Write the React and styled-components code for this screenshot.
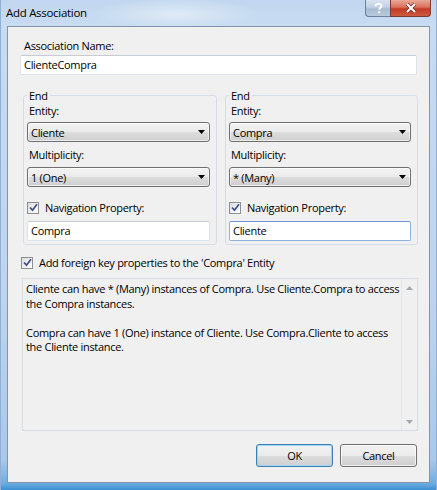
import React from "react";
import styled, { createGlobalStyle, css } from "styled-components";

const Global = createGlobalStyle`
  html, body { margin: 0; padding: 0; background: #c8dbf0; }
  body { width: 437px; height: 490px; overflow: hidden; }
  * { box-sizing: border-box; }
`;

const FONT = `"Open Sans", "Noto Sans", sans-serif`;

const Window = styled.div`
  width: 437px;
  height: 490px;
  display: flex;
  flex-direction: column;
  font-family: ${FONT};
  font-size: 11px;
  letter-spacing: -0.3px;
  color: #000;
  background:
    radial-gradient(ellipse 120px 22px at 175px 14px, rgba(255,255,255,0.45), rgba(255,255,255,0) 70%),
    linear-gradient(to bottom, #c2d7ef 0px, #c7dbf1 26px, #bdd4ee 300px, #a9c8ea 460px, #6eaee2 483px, #3d8fd2 490px);
  border-left: 1px solid #8fb0d4;
  border-right: 1px solid #8fb0d4;
`;

const TitleBar = styled.div`
  height: 26px;
  display: flex;
  align-items: flex-start;
  justify-content: space-between;
  padding-left: 5px;
  padding-right: 5px;
`;

const Title = styled.div`
  font-size: 11.5px;
  line-height: 15px;
  padding-top: 5px;
  color: #000;
`;

const CaptionButtons = styled.div`
  display: flex;
`;

const CaptionButton = styled.div`
  height: 17px;
  display: flex;
  align-items: center;
  justify-content: center;
  border: 1px solid #6b7f98;
  border-top: none;
  ${(p) =>
    p.$close
      ? css`
          width: 41px;
          border-radius: 0 0 4px 0;
          background: linear-gradient(to bottom, #eaa898 0%, #d9705c 45%, #c23a26 55%, #cf5a40 100%);
          border-color: #7b3b33;
        `
      : css`
          width: 25px;
          border-right: none;
          border-radius: 0 0 0 4px;
          background: linear-gradient(to bottom, #d7e2ef 0%, #c2d1e3 45%, #a9bbd2 55%, #b8c9de 100%);
        `}
`;

const Client = styled.div`
  flex: 1;
  margin: 0 6px 7px 6px;
  border: 1px solid #8394ab;
  background: #f0f0f0;
  padding: 11px 12px 0 12px;
  display: flex;
  flex-direction: column;
`;

const Label = styled.div`
  line-height: 15px;
  padding-left: ${(p) => p.$indent || 0}px;
  margin-top: ${(p) => p.$mt || 0}px;
  white-space: nowrap;
`;

const TextBox = styled.div`
  height: 20px;
  margin-top: ${(p) => p.$mt || 0}px;
  background: #fff;
  border: 1px solid ${(p) => (p.$focus ? "#8bb3de" : "#dde3ea")};
  border-top-color: ${(p) => (p.$focus ? "#6d9bd1" : "#c5ccd6")};
  border-radius: 2px;
  padding: 0 3px;
  line-height: 18px;
  white-space: nowrap;
`;

const GroupsRow = styled.div`
  display: grid;
  grid-template-columns: 194px 193px;
  column-gap: 8px;
  margin-top: 13px;
  margin-left: 3px;
`;

const Group = styled.fieldset`
  margin: 0;
  min-width: 0;
  border: 1px solid #d5dde6;
  border-radius: 3px;
  padding: 0 6px 3px 3px;
  display: flex;
  flex-direction: column;
`;

const Legend = styled.legend`
  padding: 0 2px;
  margin-left: 0;
  line-height: 15px;
`;

const Combo = styled.div`
  height: 20px;
  margin-top: ${(p) => p.$mt || 0}px;
  display: flex;
  align-items: center;
  justify-content: space-between;
  padding: 0 4px 0 3px;
  border: 1px solid #707070;
  border-radius: 3px;
  background: linear-gradient(to bottom, #f3f3f3 0%, #ebebeb 50%, #dddddd 50%, #cfcfcf 100%);
  box-shadow: inset 0 0 0 1px rgba(255, 255, 255, 0.6);
  white-space: nowrap;
`;

const CheckRow = styled.div`
  display: flex;
  align-items: center;
  gap: 6px;
  height: 15px;
  margin-top: ${(p) => p.$mt || 0}px;
  margin-left: ${(p) => p.$ml || 0}px;
  white-space: nowrap;
`;

const CheckBox = styled.span`
  width: 12px;
  height: 12px;
  flex: none;
  border: 1px solid #8e8f8f;
  background: linear-gradient(135deg, #dcdcdc 0%, #f4f4f4 60%, #ffffff 100%);
  display: flex;
  align-items: center;
  justify-content: center;
`;

const Description = styled.div`
  margin-top: 8px;
  margin-left: 2px;
  margin-right: -1px;
  height: 153px;
  border: 1px solid #d3dbe3;
  display: flex;
`;

const DescText = styled.div`
  flex: 1;
  padding: 3px 0 0 3px;
  line-height: 14.5px;
  p {
    margin: 0 0 14.5px 0;
  }
`;

const ScrollBar = styled.div`
  width: 16px;
  border-left: 1px solid #e4e8ec;
  display: flex;
  flex-direction: column;
  justify-content: space-between;
  align-items: center;
  padding: 7px 0 6px;
`;

const ButtonRow = styled.div`
  display: flex;
  justify-content: flex-end;
  gap: 7px;
  margin-top: 13px;
`;

const Button = styled.div`
  width: 77px;
  height: 23px;
  display: flex;
  align-items: center;
  justify-content: center;
  border-radius: 3px;
  border: 1px solid ${(p) => (p.$default ? "#3c7fb1" : "#707070")};
  background: linear-gradient(to bottom, #f2f2f2 0%, #ebebeb 50%, #dddddd 50%, #cfcfcf 100%);
  box-shadow: inset 0 0 0 1px ${(p) => (p.$default ? "#9fd5f4" : "rgba(255,255,255,0.7)")};
`;

const Arrow = () => (
  <svg width="7" height="4" viewBox="0 0 7 4">
    <path d="M0 0 H7 L3.5 4 Z" fill="#000" />
  </svg>
);

const Check = () => (
  <svg width="9" height="9" viewBox="0 0 9 9">
    <path d="M1 4.5 L3.5 7.2 L8 1.2" fill="none" stroke="#3b4f8e" strokeWidth="1.7" />
  </svg>
);

const ScrollArrow = ({ up }) => (
  <svg width="7" height="4" viewBox="0 0 7 4">
    <path d={up ? "M0 4 H7 L3.5 0 Z" : "M0 0 H7 L3.5 4 Z"} fill="#a4a9ae" />
  </svg>
);

const End = ({ entity, mult, nav, focus }) => (
  <Group>
    <Legend>End</Legend>
    <Label $indent={2}>Entity:</Label>
    <Combo $mt={4}>
      <span>{entity}</span>
      <Arrow />
    </Combo>
    <Label $indent={2} $mt={5}>Multiplicity:</Label>
    <Combo $mt={5}>
      <span>{mult}</span>
      <Arrow />
    </Combo>
    <CheckRow $mt={13}>
      <CheckBox>
        <Check />
      </CheckBox>
      Navigation Property:
    </CheckRow>
    <TextBox $mt={6} $focus={focus}>{nav}</TextBox>
  </Group>
);

export default function App() {
  return (
    <>
      <Global />
      <Window>
        <TitleBar>
          <Title>Add Association</Title>
          <CaptionButtons>
            <CaptionButton>
              <svg width="9" height="11" viewBox="0 0 9 11">
                <path
                  d="M1.5 3.2 C1.5 1.5 2.8 0.8 4.5 0.8 C6.3 0.8 7.5 1.7 7.5 3.1 C7.5 4.6 5.2 5 5.2 6.8"
                  fill="none"
                  stroke="#fff"
                  strokeWidth="1.8"
                />
                <rect x="4.2" y="8.3" width="2" height="2" fill="#fff" />
              </svg>
            </CaptionButton>
            <CaptionButton $close>
              <svg width="12" height="10" viewBox="0 0 12 10">
                <path d="M2 1 L10 9 M10 1 L2 9" stroke="#6a2a22" strokeWidth="3.4" />
                <path d="M2 1 L10 9 M10 1 L2 9" stroke="#fff" strokeWidth="2" />
              </svg>
            </CaptionButton>
          </CaptionButtons>
        </TitleBar>
        <Client>
          <Label $indent={4}>Association Name:</Label>
          <TextBox $mt={2}>ClienteCompra</TextBox>
          <GroupsRow>
            <End entity="Cliente" mult="1 (One)" nav="Compra" />
            <End entity="Compra" mult="* (Many)" nav="Cliente" focus />
          </GroupsRow>
          <CheckRow $mt={10} $ml={1}>
            <CheckBox>
              <Check />
            </CheckBox>
            Add foreign key properties to the 'Compra' Entity
          </CheckRow>
          <Description>
            <DescText>
              <p>
                Cliente can have * (Many) instances of Compra. Use Cliente.Compra to access the
                Compra instances.
              </p>
              <p>
                Compra can have 1 (One) instance of Cliente. Use Compra.Cliente to access the
                Cliente instance.
              </p>
            </DescText>
            <ScrollBar>
              <ScrollArrow up />
              <ScrollArrow />
            </ScrollBar>
          </Description>
          <ButtonRow>
            <Button $default>OK</Button>
            <Button>Cancel</Button>
          </ButtonRow>
        </Client>
      </Window>
    </>
  );
}
